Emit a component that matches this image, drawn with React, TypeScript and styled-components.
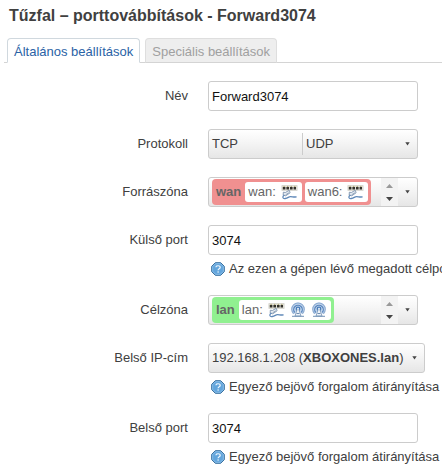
import React, { useState } from "react";
import styled, { createGlobalStyle } from "styled-components";

const GlobalStyle = createGlobalStyle`
  * { box-sizing: border-box; }
  body {
    margin: 0;
    background: #fff;
    color: #404040;
    font-family: "Liberation Sans", Arial, sans-serif;
    font-size: 13px;
    line-height: 18px;
    overflow-x: hidden;
  }
  button, input { font: inherit; color: inherit; margin: 0; }
`;

const Page = styled.main`
  padding: 6px 0 0 4px;
`;

const Title = styled.h2`
  margin: 0 0 12px;
  padding-left: 5px;
  font-size: 16px;
  line-height: 20px;
  font-weight: bold;
  white-space: nowrap;
`;

const TabBar = styled.div`
  display: flex;
  gap: 5px;
  padding-left: 3px;
  border-bottom: 1px solid #d4d4d4;
`;

const Tab = styled.button<{ $active?: boolean }>`
  height: 25px;
  margin-bottom: -1px;
  padding: 2px 6px 0;
  white-space: nowrap;
  border: 1px solid ${(p) => (p.$active ? "#d0d8de" : "#dedede")};
  border-bottom-color: ${(p) => (p.$active ? "#fff" : "#d4d4d4")};
  border-radius: 4px 4px 0 0;
  background: ${(p) => (p.$active ? "#fff" : "#eee")};
  color: ${(p) => (p.$active ? "#2a62a5" : "#a0a0a0")};
`;

const Form = styled.form`
  display: flex;
  flex-direction: column;
  gap: 18px;
  padding-top: 18px;
`;

const Row = styled.div`
  display: grid;
  grid-template-columns: 184px minmax(0, 1fr);
  column-gap: 20px;
`;

const Label = styled.label`
  padding-top: 6px;
  text-align: right;
`;

const Field = styled.div`
  display: flex;
  flex-direction: column;
  align-items: flex-start;
`;

const TextInput = styled.input`
  width: 210px;
  height: 30px;
  padding: 0 3px;
  border: 1px solid #ccc;
  border-radius: 3px;
  background: #fff;
  color: #111;
`;

const Hint = styled.p`
  display: flex;
  align-items: center;
  gap: 4px;
  height: 17px;
  margin: 5px 0 0;
  padding-left: 3px;
  white-space: nowrap;

  svg { flex: none; }
`;

const dropFace = `
  height: 30px;
  border: 1px solid #ccc;
  border-radius: 3px;
  background: linear-gradient(#fff, #f6f6f6 40%, #e6e6e6);
`;

const DropButton = styled.button<{ $wide?: boolean }>`
  ${dropFace}
  display: flex;
  align-items: center;
  width: ${(p) => (p.$wide ? "217px" : "210px")};
  padding: 0 7px 0 3px;
  text-align: left;
  white-space: nowrap;
`;

const Choice = styled.span`
  flex: 1;
  line-height: 22px;

  & + & {
    flex-grow: 1.1;
    padding-left: 3px;
    border-left: 1px solid #ccc;
  }
`;

const ZoneBox = styled.div`
  ${dropFace}
  display: flex;
  align-items: center;
  width: 210px;
  padding-left: 3px;
`;

const Zone = styled.span<{ $color: string }>`
  display: flex;
  align-items: center;
  gap: 4px;
  height: 26px;
  padding: 3px 3px 3px 4px;
  border-radius: 4px;
  background: ${(p) => p.$color};
  color: #666;
  white-space: nowrap;
`;

const Networks = styled.span`
  display: flex;
  gap: 3px;
`;

const Network = styled.span`
  display: flex;
  align-items: center;
  gap: 5px;
  height: 20px;
  padding: 0 4px 0 3px;
  border-radius: 3px;
  background: #fff;
`;

const Stepper = styled.span`
  display: flex;
  flex-direction: column;
  width: 17px;
  height: 28px;
  margin-left: auto;
  padding: 2px 0 1px;
  background: #f3f3f3;
`;

const IconButton = styled.button<{ $dim?: boolean }>`
  display: flex;
  flex: 1;
  align-items: center;
  justify-content: center;
  padding: 0;
  border: 0;
  background: none;
  color: ${(p) => (p.$dim ? "#999" : "#444")};
`;

const OpenButton = styled(IconButton)`
  flex: none;
  width: 19px;
  height: 28px;
`;

const Caret = () => (
  <svg width="5" height="4" viewBox="0 0 5 4" aria-hidden="true">
    <path d="M.3.300h4.400L2.500 3.500z" fill="#444" />
  </svg>
);

const Arrow = ({ up }: { up?: boolean }) => (
  <svg width="7" height="4" viewBox="0 0 7 4" aria-hidden="true">
    <path d={up ? "M0 4h7L3.500 0z" : "M0 0h7L3.500 4z"} fill="currentColor" />
  </svg>
);

const HelpIcon = () => (
  <svg width="14" height="14" viewBox="0 0 14 14" aria-hidden="true">
    <path d="M4.300.7h5.400l3.600 3.600v5.400l-3.600 3.600H4.300L.7 9.700V4.300z" fill="#62a5dc" stroke="#39709f" strokeLinejoin="round" />
    <path d="M4.600 1.700h4.800l2.900 2.900v4.800l-2.900 2.900H4.600L1.700 9.400V4.600z" fill="none" stroke="#9cc8ec" strokeWidth=".7" />
    <path d="M5 5.300C5 3.200 9.200 3.200 9.200 5.400c0 1.300-2.100 1.400-2.100 2.800" fill="none" stroke="#f2f8fd" strokeWidth="1.200" />
    <circle cx="7.100" cy="10" r=".8" fill="#f2f8fd" />
  </svg>
);

const EthernetIcon = () => (
  <svg width="17" height="16" viewBox="0 0 17 16" aria-label="Ethernet" role="img">
    <path d="M.8 1.500h15.400v5H.8z" fill="#e4e3da" stroke="#c4c3ba" strokeWidth=".5" />
    <path d="M1.800 3h2.600v2.500H1.800zM5.400 3h2.600v2.500H5.400zM9 3h2.600v2.500H9zM12.600 3h2.400v2.500h-2.400z" fill="#33322c" />
    <path d="M2.500 2.400h1.200M6.100 2.400h1.200M9.700 2.400h1.200M13.200 2.400h1.200" stroke="#a69d62" strokeWidth=".9" />
    <path d="M2.300 8.200l2 .3L8.300 6.300l.8 2.500-4.300 3-2.600-.7z" fill="#e6ecf2" stroke="#7189a6" strokeWidth=".8" />
    <path d="M3.400 11c-2.600 1.800-1.600 3.900.8 3.500 3-.4 3.300-2 5.400-1.900 2 .1 3.200.6 6 .3" fill="none" stroke="#5f88b8" strokeWidth="1.300" />
    <path d="M4.600 10.800l3.200-2" stroke="#7c93ad" strokeWidth=".8" />
  </svg>
);

const WifiIcon = () => (
  <svg width="16" height="16" viewBox="0 0 16 16" aria-label="Wi-Fi" role="img">
    <path d="M4 12.200a6.500 6.500 0 1 1 8 0L8 8z" fill="#c3d6ec" />
    <path d="M3.600 11.800a6.300 6.300 0 1 1 8.800 0" fill="none" stroke="#8cabd2" strokeWidth="1.100" />
    <path d="M4.800 10.500a4.300 4.300 0 1 1 6.400 0" fill="none" stroke="#5986bf" strokeWidth="1.300" />
    <circle cx="8" cy="7" r="2.400" fill="#477bb9" />
    <path d="M7.300 7h1.400l2.300 7H5z" fill="#edf2f8" stroke="#7896b8" strokeWidth=".8" />
    <circle cx="8" cy="6.700" r="1" fill="#e3eefa" />
    <path d="M6.500 11.500h3M2 14.300h12" stroke="#7190b4" />
  </svg>
);

interface ZoneSelectProps {
  id: string;
  name: string;
  color: string;
  networks: { name: string; wireless?: number }[];
}

const ZoneSelect = ({ id, name, color, networks }: ZoneSelectProps) => (
  <ZoneBox role="group" aria-labelledby={`${id}-label`}>
    <Zone $color={color}>
      <strong>{name}</strong>
      <Networks>
        {networks.map((n) => (
          <Network key={n.name}>
            {n.name}:
            <EthernetIcon />
            {Array.from({ length: n.wireless ?? 0 }, (_, i) => <WifiIcon key={i} />)}
          </Network>
        ))}
      </Networks>
    </Zone>
    <Stepper>
      <IconButton type="button" $dim aria-label="Fel"><Arrow up /></IconButton>
      <IconButton type="button" aria-label="Le"><Arrow /></IconButton>
    </Stepper>
    <OpenButton type="button" id={id} aria-haspopup="listbox"><Caret /></OpenButton>
  </ZoneBox>
);

interface FormRowProps {
  id: string;
  label: string;
  hint?: string;
  children: React.ReactNode;
}

const FormRow = ({ id, label, hint, children }: FormRowProps) => (
  <Row>
    <Label id={`${id}-label`} htmlFor={id}>{label}</Label>
    <Field>
      {children}
      {hint && <Hint><HelpIcon />{hint}</Hint>}
    </Field>
  </Row>
);

const tabs = ["Általános beállítások", "Speciális beállítások"];

export default function App() {
  const [tab, setTab] = useState(0);
  return (
    <Page>
      <GlobalStyle />
      <Title>Tűzfal – porttovábbítások - Forward3074</Title>
      <TabBar role="tablist">
        {tabs.map((t, i) => (
          <Tab key={t} type="button" role="tab" aria-selected={tab === i} $active={tab === i} onClick={() => setTab(i)}>
            {t}
          </Tab>
        ))}
      </TabBar>
      <Form>
        <FormRow id="name" label="Név">
          <TextInput id="name" defaultValue="Forward3074" />
        </FormRow>
        <FormRow id="proto" label="Protokoll">
          <DropButton id="proto" type="button" aria-haspopup="listbox">
            <Choice>TCP</Choice>
            <Choice>UDP</Choice>
            <Caret />
          </DropButton>
        </FormRow>
        <FormRow id="src" label="Forrászóna">
          <ZoneSelect id="src" name="wan" color="#f09090" networks={[{ name: "wan" }, { name: "wan6" }]} />
        </FormRow>
        <FormRow id="src-port" label="Külső port" hint="Az ezen a gépen lévő megadott célpo">
          <TextInput id="src-port" defaultValue="3074" />
        </FormRow>
        <FormRow id="dest" label="Célzóna">
          <ZoneSelect id="dest" name="lan" color="#90f090" networks={[{ name: "lan", wireless: 2 }]} />
        </FormRow>
        <FormRow id="dest-ip" label="Belső IP-cím" hint="Egyező bejövő forgalom átirányítása">
          <DropButton id="dest-ip" type="button" $wide aria-haspopup="listbox">
            <Choice>192.168.1.208 (<strong>XBOXONES.lan</strong>)</Choice>
            <Caret />
          </DropButton>
        </FormRow>
        <FormRow id="dest-port" label="Belső port" hint="Egyező bejövő forgalom átirányítása">
          <TextInput id="dest-port" defaultValue="3074" />
        </FormRow>
      </Form>
    </Page>
  );
}
